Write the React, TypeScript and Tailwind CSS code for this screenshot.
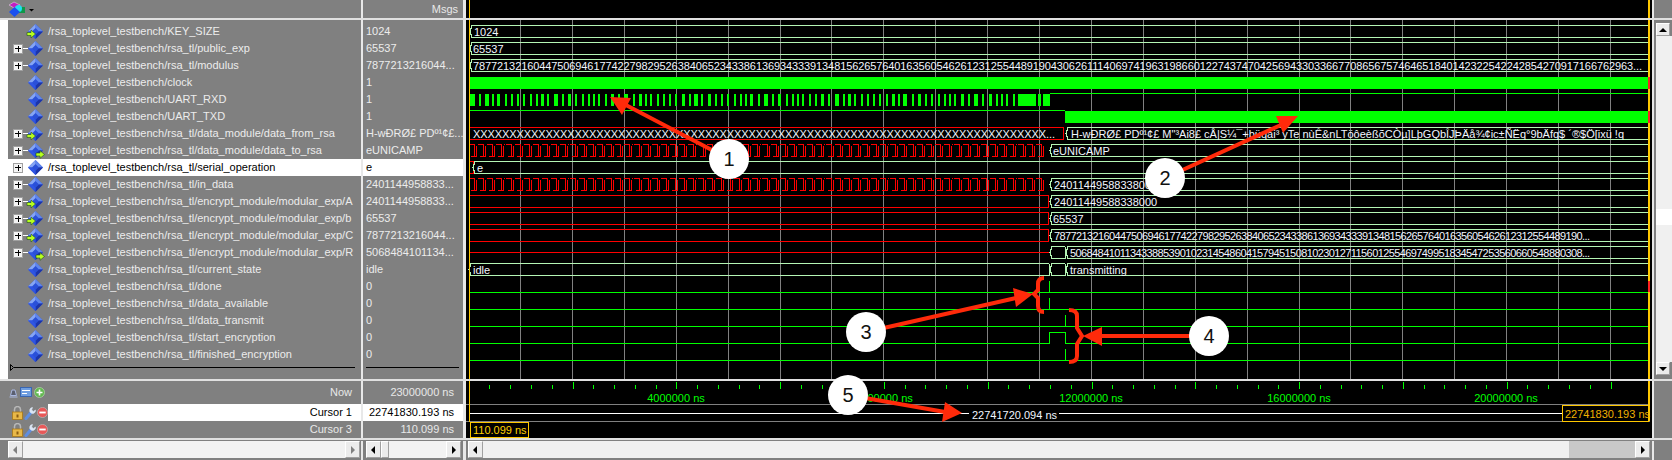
const rows = [
  { name: "/rsa_toplevel_testbench/KEY_SIZE", value: "1024", arrow: "in" },
  { name: "/rsa_toplevel_testbench/rsa_tl/public_exp", value: "65537", plus: true },
  { name: "/rsa_toplevel_testbench/rsa_tl/modulus", value: "7877213216044...", plus: true },
  { name: "/rsa_toplevel_testbench/clock", value: "1" },
  { name: "/rsa_toplevel_testbench/UART_RXD", value: "1" },
  { name: "/rsa_toplevel_testbench/UART_TXD", value: "1" },
  { name: "/rsa_toplevel_testbench/rsa_tl/data_module/data_from_rsa", value: "H-wÐRØ£ PDº¹¢£...", plus: true, arrow: "in" },
  { name: "/rsa_toplevel_testbench/rsa_tl/data_module/data_to_rsa", value: "eUNICAMP", plus: true, arrow: "out" },
  { name: "/rsa_toplevel_testbench/rsa_tl/serial_operation", value: "e", plus: true, selected: true },
  { name: "/rsa_toplevel_testbench/rsa_tl/in_data", value: "2401144958833...", plus: true },
  { name: "/rsa_toplevel_testbench/rsa_tl/encrypt_module/modular_exp/A", value: "2401144958833...", plus: true, arrow: "in" },
  { name: "/rsa_toplevel_testbench/rsa_tl/encrypt_module/modular_exp/b", value: "65537", plus: true, arrow: "in" },
  { name: "/rsa_toplevel_testbench/rsa_tl/encrypt_module/modular_exp/C", value: "7877213216044...", plus: true, arrow: "in" },
  { name: "/rsa_toplevel_testbench/rsa_tl/encrypt_module/modular_exp/R", value: "5068484101134...", plus: true, arrow: "out" },
  { name: "/rsa_toplevel_testbench/rsa_tl/current_state", value: "idle" },
  { name: "/rsa_toplevel_testbench/rsa_tl/done", value: "0" },
  { name: "/rsa_toplevel_testbench/rsa_tl/data_available", value: "0" },
  { name: "/rsa_toplevel_testbench/rsa_tl/data_transmit", value: "0" },
  { name: "/rsa_toplevel_testbench/rsa_tl/start_encryption", value: "0" },
  { name: "/rsa_toplevel_testbench/rsa_tl/finished_encryption", value: "0" },
];

const BUS = "#b4f5b4";
const RED = "#ff0000";
const GREEN = "#00ff00";
const CURSOR = "#ffc800";

const top = (i: number) => 25 + 17 * i;
const bot = (i: number) => 37 + 17 * i;
const base = (i: number) => 35 + 17 * i;

// pseudo random serial data, looks like the uart burst
function rxdBars() {
  const widths = [2, 2, 2, 2, 3, 2, 2, 4, 2, 2, 3];
  const gaps = [4, 4, 3, 5, 4, 3, 4, 5];
  const bars: number[][] = [[470, 5]];
  let x = 479;
  let n = 0;
  while (x < 1014) {
    const w = widths[(n * 7) % widths.length];
    bars.push([x, w]);
    x += w + gaps[(n * 5) % gaps.length];
    n++;
  }
  bars.push([1018, 18], [1038, 3], [1043, 7]);
  return bars;
}

function wiggle(i: number, x0: number, x1: number) {
  const t = top(i) + 0.5;
  const b = bot(i) + 0.5;
  let d = "";
  let x = x0;
  let n = 0;
  while (x < x1 - 4) {
    const step = n % 7 === 3 ? 10 : 9;
    const e = Math.min(x + step, x1);
    const v = Math.round(x + step / 2) + 0.5;
    // one level stays up, the other stays down, so the cells read as )( chains
    d += `M${x} ${t}H${v}V${b}M${v + 2} ${b}V${t + 1}M${v + 2} ${t}H${e - 1}M${x + 2} ${b}H${v + 2}`;
    x = e;
    n++;
  }
  return d;
}

function hex(i: number, x0: number, x1: number, open = false) {
  const t = top(i) + 0.5;
  const b = bot(i) + 0.5;
  const m = (t + b) / 2;
  return `M${x1} ${t}H${x0 + 2}L${x0} ${m}L${x0 + 2} ${b}H${x1}${open ? "" : `V${t}`}`;
}

function WaveText({ x, i, w, children }: { x: number; i: number; w?: number; children: string }) {
  return (
    <text x={x} y={base(i) + 1} fill="#f2f6ff" fontSize="11" textLength={w} lengthAdjust={w ? "spacing" : undefined}>
      {children}
    </text>
  );
}

function WaveRows() {
  const grid = Array.from({ length: 22 }, (_, k) => 520 + 51.9 * k);
  const right = 1648;
  return (
    <svg viewBox="466 20 1186 359" width={1186} height={359} className="block" shapeRendering="crispEdges" fontFamily="'Liberation Sans', sans-serif">
      <rect x="466" y="20" width="1186" height="359" fill="#000" />
      {grid.map((x) => (
        <line key={x} x1={Math.round(x) + 0.5} x2={Math.round(x) + 0.5} y1="20" y2="379" stroke="#808080" />
      ))}

      {[0, 1, 2].map((i) => (
        <path key={i} d={hex(i, 470, right, true)} fill="none" stroke={BUS} />
      ))}
      <WaveText x={474} i={0}>1024</WaveText>
      <WaveText x={473} i={1}>65537</WaveText>
      <WaveText x={473} i={2} w={1169}>7877213216044750694617742279829526384065234338613693433391348156265764016356054626123125544891904306261114069741963198660122743747042569433033667708656757464651840142322542242854270917166762963...</WaveText>

      <rect x="469" y="77" width={right - 469} height="12" fill={GREEN} />
      {rxdBars().map(([x, w]) => (
        <rect key={x} x={x} y="94" width={w} height="12" fill={GREEN} />
      ))}
      <line x1="1050" x2={right} y1="93.5" y2="93.5" stroke={GREEN} />
      <line x1="469" x2="1065" y1="110.5" y2="110.5" stroke={GREEN} />
      <rect x="1065" y="111" width={right - 1065} height="12" fill={GREEN} />

      <path d={`M469 127.5H1063V139.5H469`} fill="none" stroke={RED} />
      <WaveText x={473} i={6} w={582}>{"X".repeat(79) + "..."}</WaveText>
      <path d={hex(6, 1066, right, true)} fill="none" stroke={BUS} />
      <WaveText x={1071} i={6} w={553}>{"H-wÐRØ£ PDº¹¢£ M\"³Ai8£  cÅ|S¼¯+þüqai³ yTe  nùÊ&nLTöôeèßõCÒµ]LþGQbÎJÞÄå¾¢ic±ÑËq°9bÄfq$ ´®$Ö[ixü !q"}</WaveText>

      <path d={wiggle(7, 469, 1049)} fill="none" stroke={RED} />
      <path d={hex(7, 1050, right, true)} fill="none" stroke={BUS} />
      <WaveText x={1053} i={7}>eUNICAMP</WaveText>

      <path d="M469 161.5H473V173.5H469" fill="none" stroke={RED} />
      <path d={hex(8, 473, right, true)} fill="none" stroke={BUS} />
      <WaveText x={477} i={8}>e</WaveText>

      <path d={wiggle(9, 469, 1049)} fill="none" stroke={RED} />
      <path d={hex(9, 1050, right, true)} fill="none" stroke={BUS} />
      <WaveText x={1054} i={9}>24011449588338000</WaveText>

      {[10, 11, 12].map((i) => (
        <g key={i}>
          <path d={`M469 ${top(i) + 0.5}H1048V${bot(i) + 0.5}H469`} fill="none" stroke={RED} />
          <path d={hex(i, 1050, right, true)} fill="none" stroke={BUS} />
        </g>
      ))}
      <WaveText x={1054} i={10}>24011449588338000</WaveText>
      <WaveText x={1053} i={11}>65537</WaveText>
      <WaveText x={1054} i={12} w={536}>787721321604475069461774227982952638406523433861369343339134815626576401635605462612312554489190...</WaveText>

      <line x1="469" x2="1049" y1="252.5" y2="252.5" stroke={RED} />
      <path d={hex(13, 1050, 1065)} fill="none" stroke={BUS} />
      <path d={hex(13, 1066, right, true)} fill="none" stroke={BUS} />
      <WaveText x={1070} i={13} w={520}>506848410113433885390102314548604157945150810230127115601255469749951834547253560660548880308...</WaveText>

      <path d={hex(14, 469, 1049)} fill="none" stroke={BUS} />
      <path d={hex(14, 1050, 1065)} fill="none" stroke={BUS} />
      <path d={hex(14, 1066, right, true)} fill="none" stroke={BUS} />
      <WaveText x={473} i={14}>idle</WaveText>
      <WaveText x={1070} i={14}>transmitting</WaveText>

      {[15, 16, 17, 19].map((i) => (
        <line key={i} x1="469" x2={right} y1={bot(i) + 0.5} y2={bot(i) + 0.5} stroke={GREEN} />
      ))}
      <path d={`M469 343.5H1049.5V332.5H1065.5V343.5H${right}`} fill="none" stroke={GREEN} />
      <line x1="1049.5" x2="1049.5" y1="281" y2="292" stroke={GREEN} />
      <line x1="1049.5" x2="1049.5" y1="298" y2="309" stroke={GREEN} />
      <line x1="1065.5" x2="1065.5" y1="315" y2="326" stroke={GREEN} />
      <line x1="1065.5" x2="1065.5" y1="349" y2="360" stroke={GREEN} />

      <rect x="469" y="20" width="1" height="359" fill={CURSOR} />
      <rect x="1648" y="20" width="2" height="359" fill={CURSOR} />
      <rect x="1648" y="77" width="2" height="12" fill="#ff2020" />
      <rect x="1648" y="111" width="2" height="12" fill="#ff2020" />
      <rect x="1648" y="281" width="2" height="11" fill="#ff2020" />
    </svg>
  );
}

function Ruler() {
  const ticks = Array.from({ length: 56 }, (_, k) => 468.7 + 20.76 * k).filter((x) => x < 1647);
  const labels = [
    [676, "4000000 ns"],
    [884, "8000000 ns"],
    [1091, "12000000 ns"],
    [1299, "16000000 ns"],
    [1506, "20000000 ns"],
  ] as const;
  return (
    <svg viewBox="466 381 1186 57" width={1186} height={57} className="block" fontFamily="'Liberation Sans', sans-serif">
      <rect x="466" y="381" width="1186" height="57" fill="#000" />
      {ticks.slice(1).map((x, k) => (
        <line
          key={x}
          x1={Math.round(x) + 0.5}
          x2={Math.round(x) + 0.5}
          y1={(k + 1) % 5 === 0 ? 382 : 385}
          y2="389"
          stroke={GREEN}
          shapeRendering="crispEdges"
        />
      ))}
      {labels.map(([x, t]) => (
        <text key={t} x={x} y="402" fill={GREEN} fontSize="11" textAnchor="middle">
          {t}
        </text>
      ))}
      <g shapeRendering="crispEdges">
        <line x1="466" x2="1650" y1="404.5" y2="404.5" stroke="#808080" />
        <line x1="470" x2="1562" y1="413.5" y2="413.5" stroke="#fff" />
        <line x1="466" x2="1650" y1="421.5" y2="421.5" stroke="#808080" />
        <rect x="969" y="409" width="90" height="11" fill="#000" />
        <rect x="469" y="381" width="1" height="41" fill={CURSOR} />
        <rect x="1648" y="381" width="2" height="40" fill={CURSOR} />
        <rect x="1562.5" y="405.5" width="86" height="16" fill="#000" stroke={CURSOR} />
        <rect x="470.5" y="422.5" width="58" height="15" fill="#000" stroke={CURSOR} />
      </g>
      <text x="972" y="419" fill="#f2f6ff" fontSize="11">22741720.094 ns</text>
      <text x="1565" y="418" fill="#f0b000" fontSize="11">22741830.193 ns</text>
      <text x="473" y="434" fill="#ffd000" fontSize="11">110.099 ns</text>
    </svg>
  );
}

function SignalIcon({ arrow }: { arrow?: string }) {
  return (
    <svg width="21" height="17" viewBox="0 0 21 17" className="relative shrink-0">
      <polygon points="9.5,1 17,8.5 9.5,16 2,8.5" fill="#2a50d8" />
      <polygon points="9.5,1 17,8.5 13,8.5 9.5,5" fill="#5f86ec" />
      <polygon points="9.5,1 2,8.5 6,8.5 9.5,5" fill="#86a6f4" />
      <polygon points="9.5,16 17,8.5 13,8.5 9.5,12" fill="#1c34a8" />
      <polygon points="9.5,16 2,8.5 6,8.5 9.5,12" fill="#2f55e4" />
      {arrow === "in" && (
        <polygon points="1,9.5 5,9.5 5,7 9.5,11 5,15 5,12.5 1,12.5" fill="#b8ff20" stroke="#205020" strokeWidth="0.6" />
      )}
      {arrow === "out" && (
        <polygon points="10,11 14,11 14,8.7 18.5,12.5 14,16.3 14,14 10,14" fill="#b8ff20" stroke="#205020" strokeWidth="0.6" />
      )}
    </svg>
  );
}

function Plus() {
  return (
    <div className="relative flex h-[10px] w-[10px] items-center justify-center border border-[#a0a0a0] bg-[#f4f4f4]">
      <div className="absolute h-[1px] w-[6px] bg-black" />
      <div className="absolute h-[6px] w-[1px] bg-black" />
      <div className="absolute left-[9px] h-[1px] w-[5px] bg-white" />
    </div>
  );
}

function NameRow({ r }: { r: (typeof rows)[number] }) {
  return (
    <div className={`flex h-[17px] items-center ${r.selected ? "bg-white text-black" : "text-[#ececec]"}`}>
      <div className="flex w-[5px] shrink-0" />
      <div className="flex w-[13px] shrink-0 justify-start">{r.plus ? <Plus /> : null}</div>
      <SignalIcon arrow={r.arrow} />
      <span className="ml-[1px] whitespace-nowrap">{r.name}</span>
    </div>
  );
}

function Btn({ dir, muted }: { dir: "left" | "right" | "up" | "down"; muted?: boolean }) {
  const pts = { left: "6,1 2,5 6,9", right: "3,1 7,5 3,9", up: "1,7 5,3 9,7", down: "1,3 5,7 9,3" }[dir];
  return (
    <div className={`flex shrink-0 items-center justify-center border border-b-[#a0a0a0] border-l-white border-r-[#a0a0a0] border-t-white bg-[#ececec] ${dir === "up" || dir === "down" ? "h-[13px] w-[14px]" : "h-[17px] w-[15px]"}`}>
      <svg width="10" height="10" viewBox="0 0 10 10">
        <polygon points={pts} fill={muted ? "#808080" : "#000"} />
      </svg>
    </div>
  );
}

function Lock() {
  return (
    <svg width="11" height="14" viewBox="0 0 11 14" className="shrink-0">
      <path d="M2.5 6V3.6a3 3 0 0 1 6 0V6" fill="none" stroke="#b8b8b8" strokeWidth="1.5" />
      <rect x="0.5" y="6" width="10" height="7.5" fill="#e8b848" stroke="#a87818" strokeWidth="0.8" />
      <rect x="4.5" y="8.5" width="2" height="3" fill="#8a5c10" />
    </svg>
  );
}

function Wrench() {
  return (
    <svg width="12" height="14" viewBox="0 0 12 14" className="shrink-0">
      <path d="M2 12.5L7.5 6" stroke="#5f8ee0" strokeWidth="3" strokeLinecap="round" />
      <path d="M7 7a3 3 0 0 1 1.5-5.5L7.6 4 9.4 5.4 11.5 4A3 3 0 0 1 7 7z" fill="#dce6f4" stroke="#dce6f4" strokeWidth="0.6" />
    </svg>
  );
}

function Minus() {
  return (
    <svg width="11" height="11" viewBox="0 0 12 12" className="shrink-0">
      <circle cx="6" cy="6" r="5.5" fill="#e85858" stroke="#c8c8c8" strokeWidth="0.6" />
      <rect x="2.5" y="5" width="7" height="2" fill="#fff" />
    </svg>
  );
}

function CursorIcons() {
  return (
    <div className="ml-[12px] flex w-[36px] shrink-0 items-center gap-[1px]">
      <Lock />
      <Wrench />
      <Minus />
    </div>
  );
}

function ToolIcons() {
  return (
    <div className="ml-[9px] flex items-center gap-[2px]">
      <svg width="9" height="10" viewBox="0 0 9 10">
        <path d="M0.5 9H8.5M1.5 7.5L3 2h3l1.5 5.5z" fill="#5a5f70" stroke="#aab8e0" strokeWidth="1" />
      </svg>
      <svg width="12" height="11" viewBox="0 0 12 11">
        <rect x="0.5" y="0.5" width="11" height="9" fill="#6f9ee0" stroke="#3a66b0" />
        <path d="M2 3.5h8M2 6.5h5" stroke="#fff" />
      </svg>
      <svg width="11" height="11" viewBox="0 0 11 11">
        <circle cx="5.5" cy="5.5" r="5" fill="#62b850" stroke="#b8d8b0" strokeWidth="0.7" />
        <path d="M2.5 5.5h6M5.5 2.5v6" stroke="#fff" strokeWidth="1.6" />
      </svg>
    </div>
  );
}

function Annotation() {
  const red = "#ff2a0a";
  const circles: [number, number, string][] = [
    [729, 159, "1"],
    [1165, 178, "2"],
    [866, 332, "3"],
    [1209, 336, "4"],
    [848, 395, "5"],
  ];
  return (
    <svg viewBox="0 0 1672 460" width={1672} height={460} className="pointer-events-none absolute left-0 top-0" fontFamily="'Liberation Sans', sans-serif">
      <g stroke={red} strokeWidth="4" fill="none">
        <line x1="729" y1="159" x2="622" y2="103" />
        <line x1="1165" y1="178" x2="1283" y2="124" />
        <line x1="866" y1="332" x2="1016" y2="298" />
        <line x1="1209" y1="336" x2="1100" y2="336" />
        <line x1="848" y1="395" x2="945" y2="412" />
        <path d="M1044 278Q1038 278 1038 284V290L1034 294L1038 298V306Q1038 312 1044 312" />
        <path d="M1069 310Q1077 310 1077 316V328L1082 336L1077 344V356Q1077 362 1069 362" />
      </g>
      <g fill={red}>
        <polygon points="610,97 631,98 622,115" />
        <polygon points="1298,116 1276,116 1283,133" />
        <polygon points="1033,294 1013,288 1016,307" />
        <polygon points="1083,336 1102,327 1102,346" />
        <polygon points="962,413 945,402 942,422" />
      </g>
      {circles.map(([x, y, t]) => (
        <g key={t}>
          <circle cx={x} cy={y} r="20" fill="#fff" />
          <text x={x} y={y + 7} fontSize="20" fill="#111" textAnchor="middle">
            {t}
          </text>
        </g>
      ))}
    </svg>
  );
}

export default function App() {
  return (
    <div className="relative flex h-[460px] w-[1672px] flex-col overflow-hidden bg-[#808080] font-['Liberation_Sans',sans-serif] text-[11px] leading-none">
      {/* header */}
      <div className="flex h-[18px]">
        <div className="flex w-[361px] items-center pl-[8px]">
          <svg width="28" height="18" viewBox="0 0 28 18">
            <polygon points="1,5 6,2 12,5 6,8" fill="#c020c0" stroke="#e8e8e8" strokeWidth="0.5" />
            <rect x="10" y="7" width="7" height="6" fill="#109848" />
            <circle cx="10.5" cy="8.5" r="3.5" fill="#20e0f0" />
            <polygon points="1,12 6.5,7 12,12 6.5,17" fill="#1a50f0" />
            <polygon points="21,9 26,9 23.5,11.5" fill="#000" />
          </svg>
        </div>
        <div className="w-[2px] bg-[#e8e8e8]" />
        <div className="flex w-[100px] items-center justify-end pr-[5px] text-[#e8e8e8]">Msgs</div>
        <div className="w-[3px] bg-[#e8e8e8]" />
        <div className="relative w-[1186px] bg-black">
          <div className="absolute left-[3px] top-0 h-full w-[1px] bg-[#ffc800]" />
          <div className="absolute left-[1182px] top-0 h-full w-[2px] bg-[#ffc800]" />
        </div>
        <div className="w-[2px] bg-[#e8e8e8]" />
      </div>
      <div className="h-[2px] bg-[#e0e0e0]" />

      {/* signals and waves */}
      <div className="flex h-[359px]">
        <div className="relative w-[361px] pl-[8px]">
          <div className="absolute bottom-0 left-0 top-0 w-[8px] bg-white" />
          <div className="pt-[3px]">
            {rows.map((r) => (
              <NameRow key={r.name} r={r} />
            ))}
          </div>
          <div className="ml-[2px] mt-[1px] flex items-center">
            <svg width="4" height="7" viewBox="0 0 4 7">
              <polygon points="0.5,0.5 3.5,3.5 0.5,6.5" fill="none" stroke="#000" />
            </svg>
            <div className="h-[1px] w-[341px] bg-black" />
          </div>
        </div>
        <div className="w-[2px] bg-[#e8e8e8]" />
        <div className="w-[100px] pt-[3px]">
          {rows.map((r) => (
            <div key={r.name} className={`flex h-[17px] items-center pl-[3px] ${r.selected ? "bg-white text-black" : "text-[#ececec]"}`}>
              <span className="whitespace-nowrap">{r.value}</span>
            </div>
          ))}
          <div className="ml-[3px] mt-[4px] h-[1px] w-[93px] bg-black" />
        </div>
        <div className="w-[3px] bg-[#e8e8e8]" />
        <WaveRows />
        <div className="w-[2px] bg-[#e8e8e8]" />
        <div className="flex w-[18px] flex-col pl-[2px] pt-[3px]">
          <Btn dir="up" />
          <div className="flex flex-1 flex-col bg-[#f0f0f0] py-[1px]">
            <div className="mt-[172px] h-[16px] bg-white" />
          </div>
          <Btn dir="down" />
          <div className="h-[4px]" />
        </div>
      </div>
      <div className="h-[2px] bg-[#e0e0e0]" />

      {/* now and cursors */}
      <div className="flex h-[57px]">
        <div className="flex w-[361px] flex-col">
          <div className="flex h-[23px] items-center justify-between pr-[9px] text-[#e8e8e8]">
            <ToolIcons />
            <span>Now</span>
          </div>
          <div className="flex h-[17px] items-center">
            <CursorIcons />
            <div className="flex h-full flex-1 items-center justify-end bg-white pr-[9px] text-black">Cursor 1</div>
          </div>
          <div className="flex h-[17px] items-center justify-between pr-[9px] text-[#e8e8e8]">
            <CursorIcons />
            <span>Cursor 3</span>
          </div>
        </div>
        <div className="w-[2px] bg-[#e8e8e8]" />
        <div className="flex w-[100px] flex-col">
          <div className="flex h-[23px] items-center justify-end pr-[9px] text-[#e8e8e8]">23000000 ns</div>
          <div className="flex h-[17px] items-center justify-end bg-white pr-[9px] text-black">22741830.193 ns</div>
          <div className="flex h-[17px] items-center justify-end pr-[9px] text-[#e8e8e8]">110.099 ns</div>
        </div>
        <div className="w-[3px] bg-[#e8e8e8]" />
        <Ruler />
        <div className="w-[2px] bg-[#e8e8e8]" />
      </div>
      <div className="h-[2px] bg-[#e0e0e0]" />

      {/* horizontal scrollbars */}
      <div className="flex h-[20px] pt-[1px]">
        <div className="flex w-[361px] pl-[8px] pr-[1px]">
          <Btn dir="left" muted />
          <div className="h-[17px] flex-1 bg-[#f2f2f2]" />
          <Btn dir="right" muted />
        </div>
        <div className="w-[2px] bg-[#e8e8e8]" />
        <div className="flex w-[100px] pl-[3px] pr-[2px]">
          <Btn dir="left" />
          <div className="h-[17px] w-[8px] border border-b-[#a0a0a0] border-l-white border-r-[#a0a0a0] border-t-white bg-[#ececec]" />
          <div className="h-[17px] flex-1 bg-[#f2f2f2]" />
          <Btn dir="right" />
        </div>
        <div className="w-[3px] bg-[#e8e8e8]" />
        <div className="flex w-[1186px] pl-[2px] pr-[2px]">
          <Btn dir="left" />
          <div className="h-[17px] w-[1086px] bg-[#f0f0f0]" />
          <div className="h-[17px] flex-1 bg-[#c8c8c8]" />
          <Btn dir="right" />
        </div>
        <div className="w-[2px] bg-[#e8e8e8]" />
      </div>

      <Annotation />
    </div>
  );
}
